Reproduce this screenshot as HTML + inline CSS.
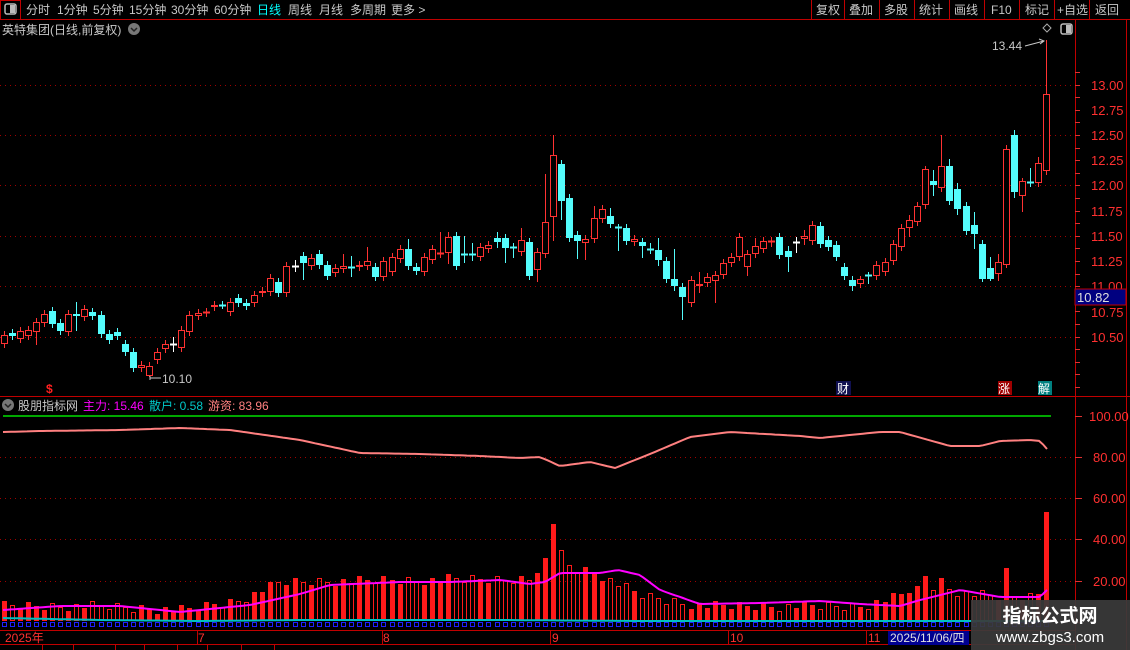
<!DOCTYPE html>
<html><head><meta charset="utf-8">
<style>
html,body{margin:0;padding:0;background:#000;width:1130px;height:650px;overflow:hidden}
body{font-family:"Liberation Sans","Noto Sans CJK SC",sans-serif;position:relative}
svg{position:absolute;left:0;top:0}
</style></head><body>
<svg id="s" width="1130" height="650" xmlns="http://www.w3.org/2000/svg" font-family="Liberation Sans, Noto Sans CJK SC, sans-serif">
<line x1="0" y1="19.5" x2="1130" y2="19.5" stroke="#c00000"/>
<rect x="0.5" y="0.5" width="20" height="19" fill="none" stroke="#c00000"/>
<rect x="5" y="4" width="11" height="10" rx="2" fill="none" stroke="#bbb" stroke-width="1.5"/>
<rect x="10" y="5" width="5" height="8" fill="#bbb"/>
<g font-size="12" fill="#c8c8c8">
<text x="26" y="14">分时</text><text x="57" y="14">1分钟</text><text x="93" y="14">5分钟</text><text x="129" y="14">15分钟</text><text x="171" y="14">30分钟</text><text x="214" y="14">60分钟</text>
<text x="257" y="14" fill="#00ffff">日线</text><text x="288" y="14">周线</text><text x="319" y="14">月线</text><text x="350" y="14">多周期</text><text x="391" y="14">更多 &gt;</text>
<text x="816" y="14">复权</text><text x="849" y="14">叠加</text><text x="884" y="14">多股</text><text x="919" y="14">统计</text><text x="954" y="14">画线</text><text x="991" y="14">F10</text><text x="1025" y="14">标记</text><text x="1057" y="14">+自选</text><text x="1095" y="14">返回</text>
</g>
<g stroke="#c00000"><line x1="811.5" y1="0" x2="811.5" y2="19"/><line x1="844.5" y1="0" x2="844.5" y2="19"/><line x1="879.5" y1="0" x2="879.5" y2="19"/><line x1="914.5" y1="0" x2="914.5" y2="19"/><line x1="949.5" y1="0" x2="949.5" y2="19"/><line x1="984.5" y1="0" x2="984.5" y2="19"/><line x1="1019.5" y1="0" x2="1019.5" y2="19"/><line x1="1054.5" y1="0" x2="1054.5" y2="19"/><line x1="1089.5" y1="0" x2="1089.5" y2="19"/></g>
<text x="2" y="34" font-size="12" fill="#c8c8c8">英特集团(日线,前复权)</text>
<circle cx="134" cy="29" r="6" fill="#777"/><path d="M131 28 l3 3 l3 -3" stroke="#222" stroke-width="1.5" fill="none"/>
<path d="M1047 24 l4 4 l-4 4 l-4 -4z" fill="none" stroke="#aaa"/>
<rect x="1061" y="24" width="11" height="10" rx="2" fill="none" stroke="#bbb" stroke-width="1.5"/><rect x="1066" y="25" width="5" height="8" fill="#bbb"/>
<line x1="1075.5" y1="20" x2="1075.5" y2="650" stroke="#c00000"/>
<line x1="1126.5" y1="20" x2="1126.5" y2="650" stroke="#c00000"/>
<line x1="0" y1="396.5" x2="1130" y2="396.5" stroke="#c00000"/>
<line x1="0" y1="630.5" x2="1075" y2="630.5" stroke="#c00000"/>
<line x1="0" y1="644.5" x2="1075" y2="644.5" stroke="#c00000"/>
<g id="grid" stroke="#a00000" stroke-dasharray="1 4"></g>
<g id="ticks" stroke="#e03030"></g>
<g font-size="13" fill="#ff3030">
<text x="1091" y="90">13.00</text><text x="1091" y="140">12.50</text><text x="1091" y="165">12.25</text><text x="1091" y="190">12.00</text><text x="1091" y="216">11.75</text><text x="1091" y="241">11.50</text><text x="1091" y="266">11.25</text><text x="1091" y="291">11.00</text><text x="1091" y="317">10.75</text><text x="1091" y="342">10.50</text><text x="1091" y="115">12.75</text>
<text x="1089" y="421">100.00</text><text x="1093" y="462">80.00</text><text x="1093" y="503">60.00</text><text x="1093" y="544">40.00</text><text x="1093" y="586">20.00</text>
</g>
<rect x="1075" y="289" width="51" height="16" fill="#000080" stroke="#c00000"/>
<text x="1077" y="302" font-size="13" fill="#ddd">10.82</text>
<g id="candles"></g>
<text x="992" y="50" font-size="12" fill="#c8c8c8">13.44</text>
<path d="M1025 46 L1044 41 M1039 39 l5 2 l-4 3" stroke="#c8c8c8" fill="none"/>
<text x="162" y="383" font-size="12" fill="#c8c8c8">10.10</text>
<path d="M150 378 L161 378 M150 376 l0 4" stroke="#c8c8c8" fill="none"/>
<text x="46" y="393" font-size="12" font-weight="bold" fill="#ff2020">$</text>
<rect x="836" y="381" width="15" height="14" fill="#101050"/><text x="837" y="393" font-size="12" fill="#fff">财</text>
<rect x="998" y="381" width="14" height="14" fill="#a00000"/><text x="998" y="393" font-size="12" fill="#fff">涨</text>
<rect x="1038" y="381" width="14" height="14" fill="#008080"/><text x="1038" y="393" font-size="12" fill="#fff">解</text>
<circle cx="8" cy="405" r="6" fill="#777"/><path d="M5 404 l3 3 l3 -3" stroke="#222" stroke-width="1.5" fill="none"/>
<text x="18" y="410" font-size="12" fill="#c8c8c8">股朋指标网</text>
<text x="83" y="410" font-size="12" fill="#ff00ff">主力: 15.46</text>
<text x="149" y="410" font-size="12" fill="#00c8c8">散户: 0.58</text>
<text x="208" y="410" font-size="12" fill="#ff8080">游资: 83.96</text>
<line x1="3" y1="416" x2="1051" y2="416" stroke="#00e000" stroke-width="1.5"/>
<polyline id="pink" fill="none" stroke="#ff8080" stroke-width="2"/>
<g id="vols"></g>
<polyline id="cyanl" fill="none" stroke="#00c0c0" stroke-width="2"/>
<polyline id="mag" fill="none" stroke="#ff00ff" stroke-width="2"/>
<g id="sq" fill="none" stroke="#2020ff"></g>
<g font-size="12" fill="#ff3030">
<text x="5" y="642">2025年</text><text x="198" y="642">7</text><text x="383" y="642">8</text><text x="552" y="642">9</text><text x="730" y="642">10</text><text x="868" y="642">11</text>
</g>
<g stroke="#c00000"><line x1="197.5" y1="631" x2="197.5" y2="644"/><line x1="382.5" y1="631" x2="382.5" y2="644"/><line x1="550.5" y1="631" x2="550.5" y2="644"/><line x1="728.5" y1="631" x2="728.5" y2="644"/><line x1="866.5" y1="631" x2="866.5" y2="644"/>
<line x1="42.5" y1="644" x2="42.5" y2="650"/><line x1="73.5" y1="644" x2="73.5" y2="650"/><line x1="115.5" y1="644" x2="115.5" y2="650"/><line x1="144.5" y1="644" x2="144.5" y2="650"/><line x1="177.5" y1="644" x2="177.5" y2="650"/><line x1="207.5" y1="644" x2="207.5" y2="650"/><line x1="241.5" y1="644" x2="241.5" y2="650"/><line x1="274.5" y1="644" x2="274.5" y2="650"/></g>
<rect x="888" y="631" width="81" height="14" fill="#000090"/>
<text x="890" y="642" font-size="12" fill="#e0e0e0">2025/11/06/四</text>
<rect x="971" y="600" width="159" height="50" fill="#3a3a3a" opacity="0.93"/>
<text x="1050" y="622" font-size="19" font-weight="bold" fill="#fff" text-anchor="middle">指标公式网</text>
<text x="1050" y="642" font-size="15" fill="#fff" text-anchor="middle">www.zbgs3.com</text>
</svg>
<script>
var NS="http://www.w3.org/2000/svg";
function el(p,t,a){var e=document.createElementNS(NS,t);for(var k in a)e.setAttribute(k,a[k]);document.getElementById(p).appendChild(e);return e;}
[85,135,185,236,286,337,457,498,539,581].forEach(function(y){el("grid","line",{x1:0,y1:y+.5,x2:1075,y2:y+.5});});
for(var y=72;y<390;y+=12.6){el("ticks","line",{x1:1075,y1:Math.round(y)+.5,x2:1080,y2:Math.round(y)+.5});}
[416,457,498,539,581,622].forEach(function(y){el("ticks","line",{x1:1075,y1:y+.5,x2:1082,y2:y+.5});});
var C=[[4,335,344,'r'],[12,333,336,'c'],[20,331,339,'r'],[28,330,336,'r'],[36,322,332,'r',0,345],[44,314,323,'r'],[52,311,324,'c'],[60,323,331,'c'],[68,314,332,'r'],[76,314,316,'c',302,331],[84,309,317,'r'],[92,312,316,'c'],[101,315,334,'c'],[109,334,340,'c'],[117,332,336,'c'],[125,344,352,'c'],[133,352,368,'c'],[141,365,368,'r'],[149,366,376,'r',0,377],[157,352,360,'r'],[165,344,349,'r'],[173,344,344,'w',337,352],[181,330,348,'r'],[189,315,332,'r'],[198,313,316,'r'],[206,312,313,'r'],[214,305,307,'r'],[222,305,305,'c'],[230,302,312,'r'],[238,298,303,'c'],[246,303,306,'c'],[254,295,303,'r'],[262,291,293,'r'],[270,278,292,'r'],[278,282,293,'c'],[286,266,293,'r'],[295,266,266,'w',260,272],
[303,256,263,'c',0,280],[311,258,266,'r'],[319,254,265,'c'],[327,265,276,'c'],[335,268,273,'r'],[343,266,269,'r',254,0],[351,267,267,'c',256,277],[359,265,267,'r'],[367,261,266,'r',247,0],[375,267,277,'c'],[383,261,277,'r'],[392,257,272,'r'],[400,249,259,'r'],[408,249,266,'c',239,0],[416,267,271,'c'],[424,257,272,'r'],[432,249,260,'r'],[440,253,254,'r',232,258],[448,237,253,'r',232,264],[456,236,266,'c'],[464,254,254,'c',236,263],[472,254,254,'c',243,261],[480,247,257,'r'],[488,245,249,'r'],[497,238,242,'c',232,248],[505,238,248,'c',0,263],[513,247,247,'c',0,258],[521,240,252,'r',228,0],[529,242,276,'c'],[537,252,270,'r',0,282],[545,222,254,'r',174,0],[553,155,217,'r',135,241],[561,164,201,'c',160,220],[569,198,238,'c',0,242],[577,235,241,'c',0,259],[585,239,243,'r',0,260],[594,218,239,'r',206,0],[602,209,219,'r',205,0],[610,216,224,'c',208,0],[618,227,227,'c',224,251],[626,228,241,'c'],[634,239,242,'r'],[642,242,246,'c',0,258],[650,249,249,'c',243,254],[658,250,260,'c',238,266],[666,261,279,'c'],[674,279,286,'c',249,291],[682,287,297,'c',0,320],
[691,280,303,'r'],[699,284,286,'r',272,293],[707,277,283,'r'],[715,275,281,'r',0,303],[723,263,275,'r'],[731,257,263,'r'],[739,237,257,'r'],[747,254,267,'r',0,276],[755,246,254,'r',238,0],[763,241,249,'r'],[771,241,241,'r',237,247],[779,237,255,'c'],[788,251,257,'c',246,272],[796,242,242,'w',237,253],[804,236,239,'r',230,245],[812,225,241,'r'],[820,226,244,'c'],[828,240,247,'c'],[836,245,257,'c'],[844,267,276,'c'],[852,280,286,'c',0,291],[860,279,284,'r',276,0],[868,275,275,'c',272,284],[876,265,276,'r'],[885,262,272,'r'],[893,244,261,'r'],[901,228,247,'r'],[909,220,228,'r',215,237],[917,206,222,'r'],[925,169,205,'r',166,0],[933,181,185,'c',170,196],[941,166,188,'r',135,192],[949,166,201,'c',159,205],[957,189,209,'c',183,215],[966,206,231,'c'],[974,225,234,'c',212,249],[982,244,279,'c',0,282],[990,268,279,'c',257,281],[998,262,274,'r',254,281],[1006,149,265,'r',0,268],[1014,135,192,'c',130,198],[1022,181,196,'r',178,212],[1030,182,182,'c',168,187],[1038,163,183,'r',157,0],[1046,94,171,'r',40,0]];
var col={r:'#ff3232',c:'#54fcfc',w:'#ffffff'};
C.forEach(function(c){var x=c[0],t=c[1],b=c[2],k=c[3],h=c[4]||t-4,l=c[5]||b+4,f=col[k];
 el("candles","line",{x1:x+.5,y1:h,x2:x+.5,y2:l,stroke:f});
 if(b-t<2){el("candles","line",{x1:x-3,y1:t+.5,x2:x+4,y2:t+.5,stroke:f,"stroke-width":2});}
 else if(k=='r'){el("candles","rect",{x:x-2.5,y:t+.5,width:6,height:b-t-1,fill:"#000",stroke:f});}
 else el("candles","rect",{x:x-3,y:t,width:7,height:b-t,fill:f});
});
function interp(P,x){for(var i=1;i<P.length;i++){if(x<=P[i][0]){var a=P[i-1],b=P[i];return a[1]+(b[1]-a[1])*(x-a[0])/(b[0]-a[0]);}}return P[P.length-1][1];}
var VB=[[0,606],[100,606],[180,610],[240,600],[280,582],[400,580],[540,578],[552,560],[600,575],[640,595],[700,606],[860,606],[900,596],[925,580],[960,592],[1000,597],[1046,595]];
var special={553:524,561:550,545:558,925:576,941:578,1006:568,1046:512,1038:594,933:590,917:586};
C.forEach(function(c,i){var x=c[0];var h=special[x]||Math.round(interp(VB,x)+((i*37)%11)-5);var filled=c[3]!='c';
 if(filled) el("vols","rect",{x:x-2,y:h,width:5,height:621-h,fill:"#ff1a1a"});
 else el("vols","rect",{x:x-1.5,y:h+.5,width:4,height:620-h,fill:"none",stroke:"#ff1a1a"});
 el("sq","rect",{x:x-1.5,y:622.5,width:4,height:4});
});
function pl(id,P,step){var s="";for(var x=P[0][0];x<=P[P.length-1][0];x+=step)s+=x+","+interp(P,x).toFixed(1)+" ";document.getElementById(id).setAttribute("points",s);}
pl("pink",[[3,432],[40,431],[120,430],[180,428],[230,430],[300,440],[360,453],[420,454],[480,456],[520,458],[540,457],[560,466],[590,462],[615,468],[650,454],[690,437],[730,432],[800,436],[820,438],[880,432],[900,432],[950,446],[980,446],[1000,441],[1030,440],[1040,441],[1047,449]],4);
pl("mag",[[3,610],[60,606],[120,606],[180,612],[250,605],[300,594],[330,585],[400,582],[450,582],[500,580],[530,584],[545,582],[560,573],[600,573],[618,570],[640,575],[660,590],[680,597],[700,604],[760,603],[820,601],[860,604],[900,606],[920,600],[960,590],[1000,597],[1040,597],[1047,590]],4);
pl("cyanl",[[3,618],[100,620],[200,621],[300,620],[400,620],[500,620],[640,621],[760,621],[900,621],[1047,621]],8);
</script>
</body></html>
